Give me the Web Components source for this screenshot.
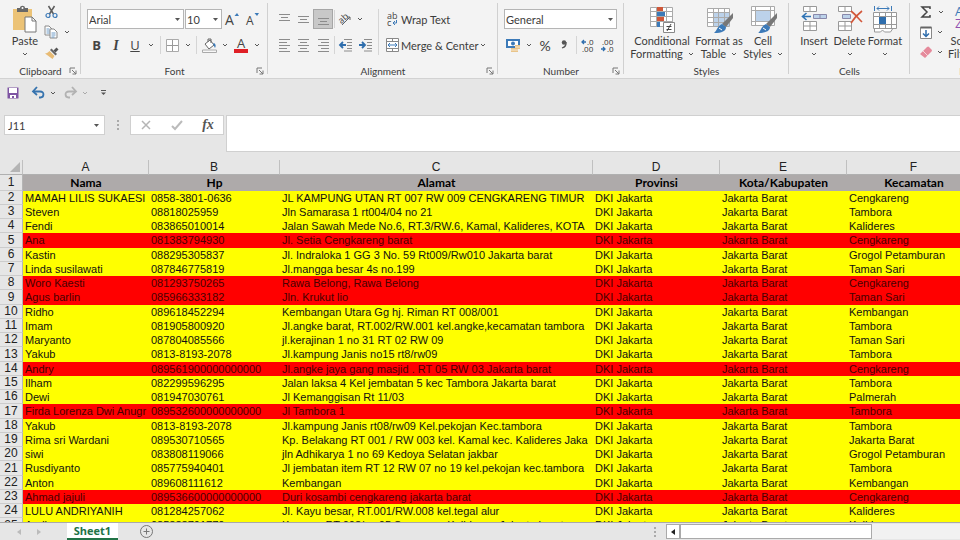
<!DOCTYPE html>
<html lang="en">
<head>
<meta charset="utf-8">
<title>Sheet1</title>
<style>
html,body{margin:0;height:100%}
body{font-family:Lato,"Open Sans",sans-serif;font-size:11px;color:#3c3c3c;overflow:hidden}
</style>
</head>
<body>
<excel-window></excel-window>
<script>
const define = (name, html, setup) => {
  const t = document.createElement('template');
  t.innerHTML = html;
  customElements.define(name, class extends HTMLElement {
    constructor() {
      super();
      this.attachShadow({mode: 'open'}).append(t.content.cloneNode(true));
    }
    connectedCallback() { if (setup && !this.ready) { this.ready = true; setup(this, this.shadowRoot); } }
  });
};

const lines = (y, xs) => xs.map((p, i) => `<path d="M${p[0]} ${y + i * 3 + .5}H${p[1]}"/>`).join('');
const grey = s => `<g stroke="#8c8c8c" fill="none">${s}</g>`;
const brush = `<path d="M24 10l3-3v5l-7 9-4-3z" fill="#777"/><path d="M16 18l4 3c0 4-4 6-12 6 3-2 3-7 8-9z" fill="#3c7ab8"/><path d="M13 22l3 2" stroke="#fff"/>`;
/* name: [width, height, markup] */
const ICONS = {
  chev: [6, 4, '<path d="M1 1l2 2 2-2" fill="none" stroke="#555"/>'],
  chevlight: [6, 4, '<path d="M1 1l2 2 2-2" fill="none" stroke="#aaa"/>'],
  tri: [5, 3, '<path d="M0 0h5L2.500 3z" fill="#555"/>'],
  launch: [8, 8, '<path d="M1 6V1h5M3 3l4 4M7 3.500V7H3.500" fill="none" stroke="#777"/>'],
  paste: [26, 27, '<path d="M1 3h19v21H1z" fill="#ecc377"/><path d="M5 2h3c0-3 5-3 5 0h3v4H5z" fill="#686868"/><circle cx="10.500" cy="2" r="1" fill="#fff"/><path d="M13 11h7l4 4v11H13z" fill="#fff" stroke="#777"/><path d="M20 11v4h4" fill="none" stroke="#777"/>'],
  cut: [13, 14, '<path d="M3.500 1l5 8M9.500 1l-5 8" stroke="#5c5c5c" stroke-width="1.500"/><circle cx="3" cy="10.500" r="2" fill="none" stroke="#3c7ab8" stroke-width="1.200"/><circle cx="10" cy="10.500" r="2" fill="none" stroke="#3c7ab8" stroke-width="1.200"/>'],
  copy: [14, 14, '<path d="M1 1h4l3 3v6H1z" fill="#fff" stroke="#8a8a8a"/><path d="M2.500 4h3M2.500 6h4M2.500 8h4" stroke="#6e9cc8"/><path d="M6 4h4l3 3v6H6z" fill="#fff" stroke="#8a8a8a"/><path d="M7.500 8h4M7.500 10h4M7.500 12h3" stroke="#6e9cc8"/>'],
  painter: [14, 13, '<path d="M8.500 4.500l3-3 2 2-3 3z" fill="#555"/><path d="M5 4l1.500-1.500L12 8l-1.500 1.500z" fill="#666"/><path d="M4.500 5l5 5-2 3L0 7.500c2 0 3-1 4.500-2.500z" fill="#e8bb74"/>'],
  bigA: [14, 15, '<text x="0" y="13" font-size="14" fill="#444">A</text><path d="M9.500 4L12 1l2 3z" fill="#3c7ab8"/>'],
  smallA: [14, 15, '<text x="1" y="13" font-size="12" fill="#444">A</text><path d="M9.500 1h4.500l-2 3z" fill="#3c7ab8"/>'],
  borders: [13, 13, '<path d="M.5.5h12v12H.5z" fill="#fff" stroke="#aaa"/><path d="M6.500 1v11M1 6.500h11" stroke="#999"/>'],
  fill: [15, 15, '<path d="M3 6l5-4 4 5-5 4z" fill="#fff" stroke="#666"/><path d="M6 4V1h3v4" fill="none" stroke="#666"/><path d="M12 5c2 1 2 3 1 5l-2-4z" fill="#3c7ab8"/><path d="M.5 12h14v2.500H.5z" fill="#f8f8f8" stroke="#aaa"/>'],
  fontcolor: [14, 15, '<text x="3" y="10" font-size="13" fill="#444">A</text><path d="M0 11h14v4H0z" fill="#df1f26"/>'],
  top: [13, 15, grey(lines(2, [[1, 12], [3, 10], [1, 12]]))],
  middle: [13, 15, grey(lines(4, [[1, 12], [3, 10], [1, 12]]))],
  bottom: [13, 15, grey(lines(6, [[1, 12], [3, 10], [1, 12]]))],
  left: [13, 15, grey(lines(1, [[1, 12], [1, 9], [1, 12], [1, 9], [1, 12]]))],
  center: [13, 15, grey(lines(1, [[1, 12], [3, 10], [1, 12], [3, 10], [1, 12]]))],
  right: [13, 15, grey(lines(1, [[1, 12], [4, 12], [1, 12], [4, 12], [1, 12]]))],
  orient: [14, 13, '<text x="0" y="9" font-size="9" fill="#444" transform="rotate(-42 4 7)">ab</text><path d="M3 12l8-8M8 4h3v3" fill="none" stroke="#666"/>'],
  outdent: [14, 14, grey('<path d="M5 1.500h8M8 4.500h5M8 7.500h5M8 10.500h5M5 13h8"/>') + '<path d="M7 7H2M4 4L1 7l3 3" fill="none" stroke="#2f6ead" stroke-width="1.800"/>'],
  indent: [14, 14, grey('<path d="M5 1.500h8M8 4.500h5M8 7.500h5M8 10.500h5M5 13h8"/>') + '<path d="M0 7h5M3 4l3 3-3 3" fill="none" stroke="#2f6ead" stroke-width="1.800"/>'],
  wrap: [12, 15, '<text x="1" y="7" font-size="9" fill="#444">ab</text><text x="1" y="14" font-size="9" fill="#444">c</text><path d="M10.500 8v3H7M9 9l-2 2 2 2" fill="none" stroke="#3c7ab8"/>'],
  merge: [12, 14, '<path d="M.5.5h12v13H.5zM.5 3.500h12M.5 10.500h12M6.500.5v3M6.500 10.500v3" fill="#fff" stroke="#888"/><path d="M2 7h9M4 5L2 7l2 2M9 5l2 2-2 2" fill="none" stroke="#3c7ab8"/>'],
  money: [14, 14, '<path d="M1 2h12v7H1z" fill="#fff" stroke="#3c7ab8" stroke-width="2"/><circle cx="7" cy="5.500" r="2" fill="#3c7ab8"/><path d="M9 7h5v4h-2v3H5v-4h4z" fill="#e9c48a"/><path d="M5 12h7M9 9h5" stroke="#f7ead3"/>'],
  comma: [8, 12, '<circle cx="4" cy="3.500" r="2.200" fill="#555"/><path d="M6 3c.5 3-1 5-4 6" fill="none" stroke="#555" stroke-width="1.300"/>'],
  incdec: [14, 13, '<text x="6" y="6" font-size="8" fill="#333">.0</text><text x="1" y="13" font-size="8" fill="#333">.00</text><path d="M5 3H1M3 1L1 3l2 2" fill="none" stroke="#2f6ead" stroke-width="1.300"/>'],
  decdec: [14, 13, '<text x="1" y="6" font-size="8" fill="#333">.00</text><text x="6" y="13" font-size="8" fill="#333">.0</text><path d="M0 10h4M2 8l2 2-2 2" fill="none" stroke="#2f6ead" stroke-width="1.300"/>'],
  cond: [26, 27, '<path d="M1.500 1.500h22v19h-22zM1.500 5.500h22M1.500 10.500h22M1.500 15.500h22M7.500 1.500v19M17.500 1.500v19" fill="#fff" stroke="#aaa"/><path d="M8 1h4v4H8zM8 11h5v4H8z" fill="#cf5638"/><path d="M8 6h8v4H8zM8 16h3v5H8z" fill="#3c7ab8"/><path d="M12 1h2v4h-2zM13 11h2v4h-2z" fill="#cf5638"/><path d="M14.500 16.500h11v10h-11z" fill="#fff" stroke="#888"/><path d="M17.500 20.500h5M17.500 23.500h5M22 18l-4 7" stroke="#444" fill="none"/>'],
  tablefmt: [27, 27, '<path d="M1.500 2.500h22v18h-22z" fill="#fff"/><path d="M7 7h16v13H7z" fill="#bcd2ea"/><path d="M1.500 2.500h22v18h-22zM1.500 6.500h22M1.500 11.500h22M1.500 16.500h22M7.500 2.500v18M12.500 2.500v18M18.500 2.500v18" stroke="#aaa" fill="none"/>' + brush],
  cellfmt: [27, 27, '<path d="M1.500.5h23v19h-23zM1.500 4.500h23M1.500 15.500h23M5.500.5v19M20.500.5v19" fill="#fff" stroke="#aaa"/><path d="M6 5h14v10H6z" fill="#bcd2ea"/>' + brush],
  insert: [26, 26, '<path d="M2.500.5h13v5h-13zM9 .5v5M2.500 15.500h13v9h-13zM9 15.500v9M2.500 20h13" fill="#fff" stroke="#999"/><path d="M12.500 8.500h13v4h-13zM19 8.500v4" fill="#bcd2ea" stroke="#88a"/><path d="M10 10.500H2M5.500 7l-4 3.500 4 3.500" fill="none" stroke="#2f74b5" stroke-width="1.600"/>'],
  del: [26, 26, '<path d="M1.500.5h13v5h-13zM8 .5v5M1.500 15.500h13v9h-13zM8 15.500v9M1.500 20h13" fill="#fff" stroke="#999"/><path d="M5.500 8.500h8v4h-8z" fill="#bcd2ea" stroke="#88a"/><path d="M14 5c4 3 7 7 11 11M25 5c-4 3-8 7-11 12" fill="none" stroke="#d2573a" stroke-width="1.600"/>'],
  format: [26, 27, '<path d="M1.500 6.500h23v16h-23zM1.500 10.500h23M1.500 18.500h23M7.500 6.500v16M13.500 6.500v16M19.500 6.500v16" fill="#fff" stroke="#999"/><path d="M7 11h7v7H7z" fill="#2f6ead"/><path d="M2.500 23v3h6l2-2 2 2h6l2-3" fill="#fff" stroke="#999"/><path d="M2.500 0v5M19.500 0v5" stroke="#3c7ab8" /><path d="M5 2.500h12M7 .5l-2 2 2 2M15 .5l2 2-2 2" fill="none" stroke="#3c7ab8"/>'],
  sigma: [12, 12, '<path d="M10 3V1H2l5 5-5 5h8V9" fill="none" stroke="#444" stroke-width="1.500"/>'],
  filldown: [12, 13, '<path d="M.5 1.500h11v11H.5z" fill="#fff" stroke="#888"/><path d="M.5 1.500h11" stroke="#666" stroke-width="2"/><path d="M6 4v6M3 7.500l3 3 3-3" fill="none" stroke="#2f6ead" stroke-width="1.500"/>'],
  eraser: [12, 12, '<path d="M0 8l7-7c1-.7 1.500-.7 2 0l2.500 2.500c.6.700.6 1.200 0 2L5 12z" fill="#e58a9b"/><path d="M3 5l5 5" stroke="#f7d5da"/>'],
  sort: [22, 26, '<text x="0" y="10" font-size="13" fill="#3c7ab8">A</text><text x="0" y="22" font-size="13" fill="#9250b0">Z</text>'],
  save: [12, 12, '<path d="M.5.5h11v11H.5z" fill="#7e54a3"/><path d="M2 1h8v5H2z" fill="#fff"/><path d="M3 8h6v3H7V9H5v2H3z" fill="#fff"/>'],
  undo: [13, 12, '<path d="M2 4.500h6c5 0 4 6 .5 6H7" fill="none" stroke="#3673ae" stroke-width="1.800"/><path d="M5 0L1 4.500 5 8" fill="none" stroke="#3673ae" stroke-width="1.800"/>'],
  redo: [13, 12, '<path d="M11 4.500H5c-5 0-4 6-.5 6H6" fill="none" stroke="#b2b2b2" stroke-width="1.800"/><path d="M8 0l4 4.500L8 8" fill="none" stroke="#b2b2b2" stroke-width="1.800"/>'],
  custom: [5, 6, '<path d="M0 .5h5" stroke="#555"/><path d="M0 2.500h5L2.500 5z" fill="#555"/>'],
  dots: [2, 10, '<path d="M0 0h2v2H0zM0 4h2v2H0zM0 8h2v2H0z" fill="#aaa"/>'],
  cross: [10, 10, '<path d="M1 1l8 8M9 1L1 9" stroke="#b5b5b5" stroke-width="1.500"/>'],
  check: [12, 10, '<path d="M1 6l3 3 7-8" fill="none" stroke="#bbb" stroke-width="2"/>'],
  prev: [4, 6, '<path d="M4 0v6L0 3z" fill="#bbb"/>'],
  next: [4, 6, '<path d="M0 0v6l4-3z" fill="#bbb"/>'],
  back: [4, 6, '<path d="M4 0v6L0 3z" fill="#222"/>'],
  plus: [13, 13, '<circle cx="6.500" cy="6.500" r="6" fill="none" stroke="#777"/><path d="M6.500 3.500v6M3.500 6.500h6" stroke="#777"/>'],
  corner: [10, 10, '<path d="M10 0v10H0z" fill="#b4b4b4"/>']
};
define('ui-icon', `<style>:host{display:inline-flex;flex:none}svg{display:block;overflow:visible;font-family:"Open Sans",sans-serif}</style>`, (el, root) => {
  const [w, h, body] = ICONS[el.getAttribute('name')];
  root.innerHTML += `<svg width="${w}" height="${h}" viewBox="0 0 ${w} ${h}" aria-hidden="true">${body}</svg>`;
});

/* small button: an icon or slotted glyph */
define('tool-button', `<style>
:host{display:flex;align-items:center;justify-content:center;height:20px;min-width:0}
button{all:unset;display:flex;align-items:center;justify-content:center;gap:3px;box-sizing:border-box;width:100%;height:100%;white-space:nowrap}
:host([selected]) button{background:#c8c8c8;border:1px solid #a6a6a6}
:host([start]) button{justify-content:flex-start}
</style><button type="button"><slot></slot></button>`, (el, root) => {
  const b = root.querySelector('button');
  if (el.getAttribute('label')) b.setAttribute('aria-label', el.getAttribute('label'));
  if (el.getAttribute('icon')) b.insertAdjacentHTML('afterbegin', `<ui-icon name="${el.getAttribute('icon')}"></ui-icon>`);
});

/* tall button: icon over one or two lines of text */
define('big-button', `<style>
:host{display:block}
button{all:unset;display:flex;flex-direction:column;align-items:center;width:100%;white-space:nowrap}
.pic{height:28px;display:flex;align-items:flex-start}
span{display:flex;align-items:center;gap:5px;height:13px;line-height:13px}
</style><button type="button"><div class="pic"></div><span class="a"></span><span class="b"></span></button>`, (el, root) => {
  root.querySelector('.pic').innerHTML = `<ui-icon name="${el.getAttribute('icon')}"></ui-icon>`;
  root.querySelector('.a').textContent = el.getAttribute('first');
  root.querySelector('.b').innerHTML = (el.getAttribute('second') || '') + '<ui-icon name="chev"></ui-icon>';
});

define('combo-box', `<style>
:host{display:grid;align-items:center;height:20px}
select{appearance:none;grid-area:1/1;width:100%;height:100%;box-sizing:border-box;margin:0;padding:0 0 0 1px;border:1px solid #b5b5b5;border-radius:0;background:#fff;font:inherit;color:inherit}
ui-icon{grid-area:1/1;justify-self:end;margin-right:4px;pointer-events:none}
</style><select></select><ui-icon name="tri"></ui-icon>`, (el, root) => {
  const s = root.querySelector('select');
  s.setAttribute('aria-label', el.getAttribute('label'));
  s.innerHTML = `<option>${el.getAttribute('value')}</option>`;
});

define('ribbon-group', `<style>
:host{display:flex;flex-direction:column;flex:none;box-sizing:border-box;position:relative}
.body{flex:1;display:flex}
.foot{display:grid;grid-template-columns:12px 1fr 12px;align-items:center;height:14px;text-align:center;font-size:10px}
.foot button{all:unset;grid-column:3;display:flex}
.foot span{grid-column:2}
:host::after{content:"";position:absolute;right:0;top:3px;bottom:4px;width:1px;background:#d0d0d0}
</style><div class="body"><slot></slot></div><div class="foot"><span></span></div>`, (el, root) => {
  root.querySelector('span').textContent = el.getAttribute('label');
  if (el.hasAttribute('launcher')) root.querySelector('.foot').insertAdjacentHTML('beforeend', `<button type="button" aria-label="${el.getAttribute('label')} settings"><ui-icon name="launch"></ui-icon></button>`);
});

define('ribbon-bar', `<style>
:host{display:flex;height:78px;background:#f3f3f3;border-bottom:1px solid #d2d2d2;overflow:hidden;flex:none}
.stack{display:flex;flex-direction:column}
.row{display:grid;height:20px;align-items:center}
.sep{width:1px;height:18px;background:#d5d5d5;justify-self:center}
.bigs{display:grid;padding-top:6px;align-items:start}
b,i,u{font-family:"Open Sans",sans-serif;font-size:13px;line-height:18px;color:#444}
i b{font-family:"Liberation Serif",serif;font-size:14px}
.pct{font-size:14px}
.clip{width:81px}.font{width:187px}.align{width:230px}.num{width:126px}.styles{width:165px}.cells{width:121px}.edit{width:129px}
.gap{gap:6px;padding-top:9px}
</style>
<ribbon-group class="clip" label="Clipboard" launcher>
  <div class="bigs" style="grid-template-columns:36px;padding-left:7px"><big-button icon="paste" first="Paste"></big-button></div>
  <div class="stack" style="padding-top:2px">
    <tool-button icon="cut" label="Cut" style="width:16px"></tool-button>
    <div class="row" style="grid-template-columns:16px 15px"><tool-button icon="copy" label="Copy"></tool-button><tool-button icon="chev" label="Copy options"></tool-button></div>
    <tool-button icon="painter" label="Format Painter" style="width:18px"></tool-button>
  </div>
</ribbon-group>
<ribbon-group class="font" label="Font" launcher>
  <div class="stack gap" style="padding-left:6px">
    <div class="row" style="grid-template-columns:97px 38px 20px 20px">
      <combo-box label="Font" value="Arial"></combo-box><combo-box label="Font size" value="10" style="margin-left:1px"></combo-box>
      <tool-button icon="bigA" label="Increase font size"></tool-button><tool-button icon="smallA" label="Decrease font size"></tool-button>
    </div>
    <div class="row" style="grid-template-columns:19px 20px 18px 14px 4px 20px 12px 4px 22px 10px 22px 10px">
      <tool-button label="Bold"><b>B</b></tool-button><tool-button label="Italic"><i><b>I</b></i></tool-button><tool-button label="Underline"><u>U</u></tool-button><tool-button icon="chev" label="Underline options"></tool-button>
      <span class="sep"></span><tool-button icon="borders" label="Borders"></tool-button><tool-button icon="chev" label="Border options"></tool-button><span class="sep"></span>
      <tool-button icon="fill" label="Fill color"></tool-button><tool-button icon="chev" label="Fill options"></tool-button>
      <tool-button icon="fontcolor" label="Font color"></tool-button><tool-button icon="chev" label="Font color options"></tool-button>
    </div>
  </div>
</ribbon-group>
<ribbon-group class="align" label="Alignment" launcher>
  <div class="stack gap" style="padding-left:6px">
    <div class="row" style="grid-template-columns:20px 19px 20px 3px 20px 8px">
      <tool-button icon="top" label="Top align"></tool-button><tool-button icon="middle" label="Middle align"></tool-button><tool-button icon="bottom" label="Bottom align" selected></tool-button>
      <span class="sep"></span><tool-button icon="orient" label="Orientation"></tool-button><tool-button icon="chev" label="Orientation options"></tool-button>
    </div>
    <div class="row" style="grid-template-columns:20px 19px 20px 3px 20px 20px">
      <tool-button icon="left" label="Align left"></tool-button><tool-button icon="center" label="Center"></tool-button><tool-button icon="right" label="Align right"></tool-button>
      <span class="sep"></span><tool-button icon="outdent" label="Decrease indent"></tool-button><tool-button icon="indent" label="Increase indent"></tool-button>
    </div>
  </div>
  <div class="stack gap" style="margin-left:2px;padding-left:8px;background:linear-gradient(#d5d5d5,#d5d5d5) 0 9px/1px 46px no-repeat">
    <tool-button icon="wrap" start>Wrap Text</tool-button>
    <div class="row" style="grid-template-columns:90px 14px"><tool-button icon="merge" start>Merge &amp; Center</tool-button><tool-button icon="chev" label="Merge options"></tool-button></div>
  </div>
</ribbon-group>
<ribbon-group class="num" label="Number" launcher>
  <div class="stack gap" style="padding-left:6px">
    <combo-box label="Number format" value="General" style="width:113px"></combo-box>
    <div class="row" style="grid-template-columns:18px 14px 18px 20px 4px 20px 20px">
      <tool-button icon="money" label="Accounting format"></tool-button><tool-button icon="chev" label="Accounting options"></tool-button>
      <tool-button label="Percent"><span class="pct">%</span></tool-button><tool-button icon="comma" label="Comma style"></tool-button><span class="sep"></span>
      <tool-button icon="incdec" label="Increase decimal"></tool-button><tool-button icon="decdec" label="Decrease decimal"></tool-button>
    </div>
  </div>
</ribbon-group>
<ribbon-group class="styles" label="Styles">
  <div class="bigs" style="grid-template-columns:64px 50px 38px;padding-left:6px">
    <big-button icon="cond" first="Conditional" second="Formatting"></big-button><big-button icon="tablefmt" first="Format as" second="Table"></big-button><big-button icon="cellfmt" first="Cell" second="Styles"></big-button>
  </div>
</ribbon-group>
<ribbon-group class="cells" label="Cells">
  <div class="bigs" style="grid-template-columns:36px 35px 36px;padding-left:7px">
    <big-button icon="insert" first="Insert"></big-button><big-button icon="del" first="Delete"></big-button><big-button icon="format" first="Format"></big-button>
  </div>
</ribbon-group>
<ribbon-group class="edit" label="Editing">
  <div class="stack" style="padding:2px 0 0 7px">
    <div class="row" style="grid-template-columns:18px 12px"><tool-button icon="sigma" label="AutoSum"></tool-button><tool-button icon="chev" label="AutoSum options"></tool-button></div>
    <div class="row" style="grid-template-columns:18px 10px"><tool-button icon="filldown" label="Fill"></tool-button><tool-button icon="chev" label="Fill options"></tool-button></div>
    <div class="row" style="grid-template-columns:18px 10px"><tool-button icon="eraser" label="Clear"></tool-button><tool-button icon="chev" label="Clear options"></tool-button></div>
  </div>
  <div class="bigs" style="grid-template-columns:36px;padding-left:1px"><big-button icon="sort" first="Sort &amp;" second="Filter"></big-button></div>
</ribbon-group>`);

define('quick-access', `<style>
:host{display:grid;grid-template-columns:26px 24px 6px 28px 2px 34px;align-items:center;height:28px;background:#e6e6e6;flex:none}
</style>
<tool-button icon="save" label="Save"></tool-button><tool-button icon="undo" label="Undo"></tool-button><tool-button icon="chev" label="Undo list"></tool-button>
<tool-button icon="redo" label="Redo"></tool-button><tool-button icon="chevlight" label="Redo list"></tool-button><tool-button icon="custom" label="Customize toolbar"></tool-button>`);

define('formula-bar', `<style>
:host{display:grid;grid-template-columns:101px 23px 94px 1fr;column-gap:1px;padding:8px 0 8px 4px;background:#e6e6e6;flex:none;align-items:start}
.name,.tools{height:20px;background:#fff;border:1px solid #d0d0d0;box-sizing:border-box;display:grid;align-items:center}
.name{grid-template-columns:1fr 16px}
.tools{grid-template-columns:30px 32px 30px}
input{all:unset;box-sizing:border-box;min-width:0;height:100%;padding-left:3px}
.entry{height:37px;background:#fff;border:1px solid #d0d0d0;border-right:0;margin-left:1px}
ui-icon{justify-self:center;padding-top:5px}
.fx{font:italic bold 14px "Liberation Serif",serif;color:#555}
tool-button{height:18px}
</style>
<div class="name"><input aria-label="Name box" value="J11"><tool-button icon="tri" label="Name list"></tool-button></div>
<ui-icon name="dots"></ui-icon>
<div class="tools"><tool-button icon="cross" label="Cancel"></tool-button><tool-button icon="check" label="Enter"></tool-button><tool-button label="Insert function"><span class="fx">fx</span></tool-button></div>
<input class="entry" aria-label="Formula">`);

const K = 'Kalideres', C = 'Cengkareng', T = 'Tambora', S = 'Taman Sari', G = 'Grogol Petamburan';
const DATA = [
  ['MAMAH LILIS SUKAESI', '0858-3801-0636', 'JL KAMPUNG UTAN RT 007 RW 009 CENGKARENG TIMUR', C],
  ['Steven', '08818025959', 'Jln Samarasa 1 rt004/04 no 21', T],
  ['Fendi', '083865010014', 'Jalan Sawah Mede No.6, RT.3/RW.6, Kamal, Kalideres, KOTA', K],
  ['Ana', '081383794930', 'Jl. Setia Cengkareng barat', C, 1],
  ['Kastin', '088295305837', 'Jl. Indraloka 1 GG 3 No. 59 Rt009/Rw010 Jakarta barat', G],
  ['Linda susilawati', '087846775819', 'Jl.mangga besar 4s no.199', S],
  ['Woro Kaesti', '081293750265', 'Rawa Belong, Rawa Belong', C, 1],
  ['Agus barlin', '085966333182', 'Jln. Krukut lio', S, 1],
  ['Ridho', '089618452294', 'Kembangan Utara Gg hj. Riman RT 008/001', 'Kembangan'],
  ['Imam', '081905800920', 'Jl.angke barat, RT.002/RW.001 kel.angke,kecamatan tambora', T],
  ['Maryanto', '087804085566', 'jl.kerajinan 1 no 31 RT 02 RW 09', S],
  ['Yakub', '0813-8193-2078', 'Jl.kampung Janis no15 rt8/rw09', T],
  ['Andry', '089561900000000000', 'Jl.angke jaya gang masjid . RT 05 RW 03 Jakarta barat', C, 1],
  ['Ilham', '082299596295', 'Jalan laksa 4 Kel jembatan 5 kec Tambora Jakarta barat', T],
  ['Dewi', '081947030761', 'Jl Kemanggisan Rt 11/03', 'Palmerah'],
  ['Firda Lorenza Dwi Anugr', '089532600000000000', 'Jl Tambora 1', T, 1],
  ['Yakub', '0813-8193-2078', 'Jl.kampung Janis rt08/rw09 Kel.pekojan Kec.tambora', T],
  ['Rima sri Wardani', '089530710565', 'Kp. Belakang RT 001 / RW 003 kel. Kamal kec. Kalideres Jaka', 'Jakarta Barat'],
  ['siwi', '083808119066', 'jln Adhikarya 1 no 69 Kedoya Selatan jakbar', G],
  ['Rusdiyanto', '085775940401', 'Jl jembatan item RT 12 RW 07 no 19 kel.pekojan kec.tambora', T],
  ['Anton', '089608111612', 'Kembangan', 'Kembangan'],
  ['Ahmad jajuli', '089536600000000000', 'Duri kosambi cengkareng jakarta barat', C, 1],
  ['LULU ANDRIYANIH', '081284257062', 'Jl. Kayu besar, RT.001/RW.008 kel.tegal alur', K],
  ['Andi', '085888791770', 'Kamp. s RT 008/rw 05 Semanan, Kalideres, Jakarta barat', K]
];
define('sheet-grid', `<style>
:host{display:block;flex:1;min-height:0;overflow:hidden;background:#e6e6e6;border-bottom:1px solid #a9a9a9}
table{table-layout:fixed;border-collapse:separate;border-spacing:0;width:100%;min-width:1100px;font-family:"Liberation Sans",Arial,sans-serif;color:#111}
th,td{padding:0;overflow:hidden;white-space:nowrap;font-weight:400;font-size:11px;line-height:14px;height:14px}
td{padding-left:2px;text-align:left}
tbody tr:nth-child(4n) td{height:15px;line-height:15px}
tbody{background:#ff0}
tbody tr.red{background:#f00;color:#480000}
th[scope=row],thead th{background:#e6e6e6;color:#222;font-size:12px;line-height:13px;box-sizing:border-box}
th[scope=row]{border-right:1px solid #b5b5b5;border-bottom:1px solid #ccc}
thead .letters th{line-height:14px;height:15px;border-right:1px solid #c0c0c0;border-bottom:1px solid #b0b0b0}
thead .letters ui-icon{display:flex;justify-content:flex-end;padding-right:2px}
thead .titles th,thead .titles td{height:16px;line-height:15px}
thead .titles td{padding:0;background:#aeaaaa;text-align:center;font:bold 12px/16px Lato,sans-serif;color:#000}
</style>
<table><colgroup><col style="width:23px"><col style="width:126px"><col style="width:131px"><col style="width:313px"><col style="width:127px"><col style="width:127px"><col style="width:134px"><col></colgroup>
<thead><tr class="letters"></tr><tr class="titles"></tr></thead><tbody></tbody></table>`, (el, root) => {
  root.querySelector('.letters').innerHTML = '<th><ui-icon name="corner"></ui-icon></th>' + [...'ABCDEF'].map(c => `<th scope="col">${c}</th>`).join('') + '<th></th>';
  root.querySelector('.titles').innerHTML = '<th scope="row">1</th>' + ['Nama', 'Hp', 'Alamat', 'Provinsi', 'Kota/Kabupaten', 'Kecamatan', ''].map(c => `<td>${c}</td>`).join('');
  root.querySelector('tbody').innerHTML = DATA.map((r, i) => `<tr${r[4] ? ' class="red"' : ''}><th scope="row">${i + 2}</th>` + [r[0], r[1], r[2], 'DKI Jakarta', 'Jakarta Barat', r[3], ''].map(c => `<td>${c}</td>`).join('') + '</tr>').join('');
});

define('sheet-tabs', `<style>
:host{display:grid;grid-template-columns:9px 20px 19px 19px 51px 57px 1fr 10px 6px 294px;height:17px;background:#e6e6e6;flex:none;align-items:center}
tool-button{height:17px}
.tab{all:unset;grid-column:5;box-sizing:border-box;height:17px;background:#fff;border-bottom:2px solid #217346;color:#217346;font-family:"Open Sans",sans-serif;font-weight:700;text-align:center;line-height:15px}
.dots{grid-column:8;justify-self:center}
.scroll{grid-column:10;display:grid;grid-template-columns:14px 192px 1fr;height:15px;background:#f1f1f1}
.scroll>*{background:#fff;border:1px solid #aaa;box-sizing:border-box;height:15px}
</style>
<tool-button icon="prev" label="Previous sheet" style="grid-column:2"></tool-button><tool-button icon="next" label="Next sheet"></tool-button>
<button class="tab" type="button">Sheet1</button><tool-button icon="plus" label="New sheet"></tool-button>
<ui-icon class="dots" name="dots"></ui-icon>
<div class="scroll"><tool-button icon="back" label="Scroll left"></tool-button><div></div></div>`);

define('excel-window', `<style>:host{display:flex;flex-direction:column;height:100vh;background:#e6e6e6}</style>
<ribbon-bar></ribbon-bar><quick-access></quick-access><formula-bar></formula-bar><sheet-grid></sheet-grid><sheet-tabs></sheet-tabs>`);
</script>
</body>
</html>
